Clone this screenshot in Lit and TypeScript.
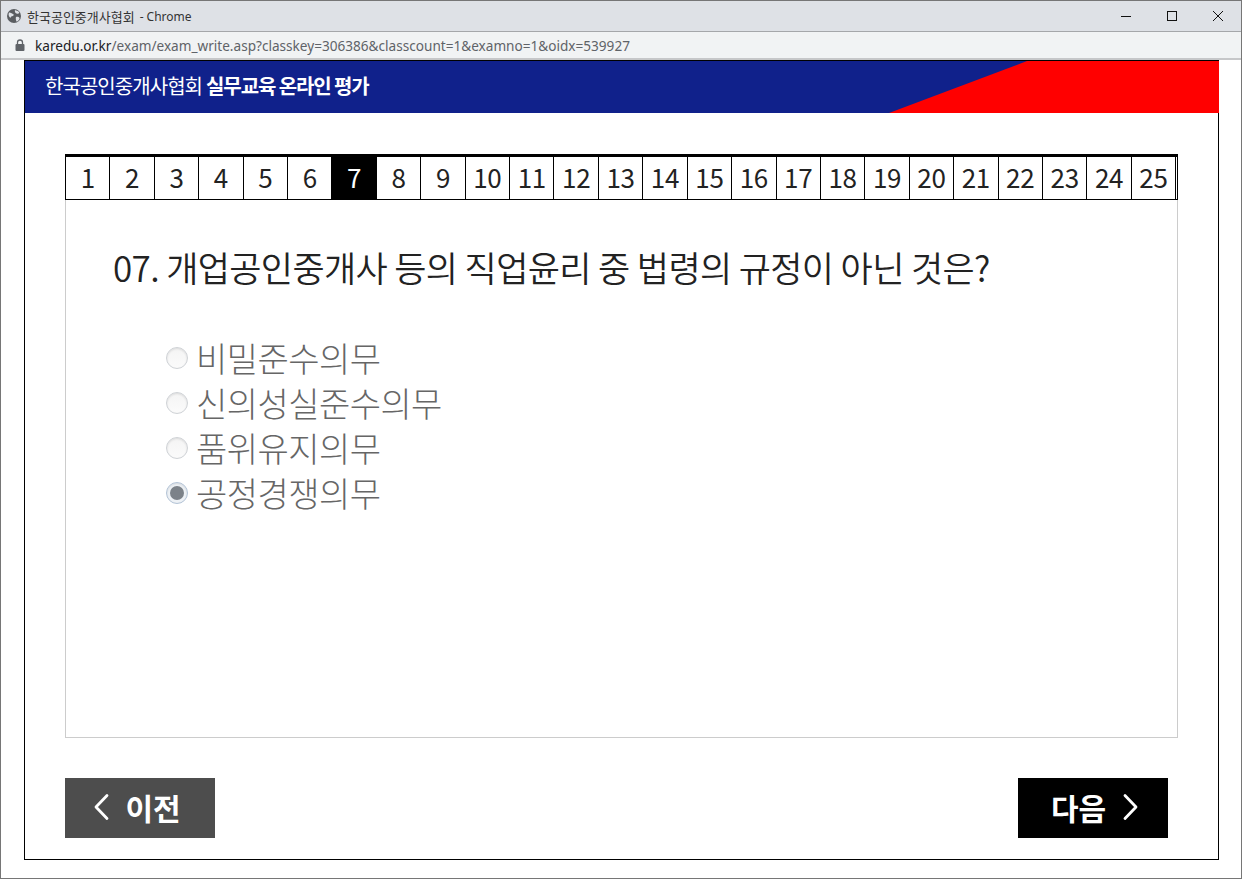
import { LitElement, html, css, svg } from "lit";
import { customElement } from "lit/decorators.js";

const nums = Array.from({ length: 25 }, (_, i) => i + 1);
const opts = ["비밀준수의무", "신의성실준수의무", "품위유지의무", "공정경쟁의무"];

@customElement("app-root")
export class AppRoot extends LitElement {
  static styles = css`
    :host { display: block; width: 1242px; height: 879px; font-family: "Noto Sans CJK KR", "Noto Sans", sans-serif; }
    * { box-sizing: border-box; }
    .win { width: 1242px; height: 879px; border: 1px solid #767676; display: flex; flex-direction: column; background: #fff; overflow: hidden; }
    .title { height: 31px; flex: none; background: #dee1e6; border-bottom: 1px solid #a5a7aa; display: flex; align-items: center; padding-left: 5px; font-size: 13px; color: #333; }
    .title svg { margin-right: 5px; flex: none; }
    .title .dash { font-family: "Noto Sans", sans-serif; font-size: 12px; margin-left: 5px; }
    .ctrls { margin-left: auto; display: flex; align-items: center; }
    .ctrls svg { display: block; margin: 0; width: 46px; height: 30px; }
    .addr { height: 28px; flex: none; background: #f1f3f4; border-bottom: 2px solid #c6c7c9; display: flex; align-items: center; padding-left: 14px; font-family: "Noto Sans", sans-serif; font-size: 13.6px; color: #5f6368; }
    .addr svg { margin-right: 10px; flex: none; }
    .addr b { font-weight: 400; color: #202124; }
    .frame { margin: 0 22px 0 23px; height: 800px; border: 1px solid #000; display: flex; flex-direction: column; }
    .head { height: 52px; flex: none; background: #10218b; display: flex; align-items: center; padding-left: 20px; color: #fff; font-size: 20px; letter-spacing: -0.95px; margin-right: -1px; }
    .head span, .head strong { padding-bottom: 3px; }
    .head strong { font-weight: 700; margin-left: 4px; letter-spacing: -1.1px; }
    .wedge { margin-left: auto; width: 330px; height: 100%; background: #f00; clip-path: polygon(138px 0, 100% 0, 100% 100%, 0 100%); }
    .body { flex: 1; padding: 41px 40px 21px 40px; display: flex; flex-direction: column; }
    .tabs { height: 46px; flex: none; display: flex; border-top: 3px solid #000; border-bottom: 1px solid #000; border-left: 1px solid #000; border-right: 1px solid #000; padding-right: 1px; }
    .tab { flex: 1; border-right: 1px solid #000; display: flex; align-items: center; justify-content: center; font-size: 26px; color: #222; line-height: 1; letter-spacing: -0.3px; padding-bottom: 3px; }
    .tab.on { background: #000; color: #fff; }
    .panel { height: 538px; flex: none; border: 1px solid #ccc; border-top: 0; padding: 38px 47px 0 47px; }
    .q { margin: 0; font-size: 35px; font-weight: 350; line-height: 58px; color: #222; letter-spacing: -0.63px; white-space: nowrap; }
    .opts { list-style: none; margin: 39px 0 0 53px; padding: 0; }
    .opt { height: 45px; display: flex; align-items: center; color: #666; font-size: 34px; font-weight: 300; line-height: 45px; letter-spacing: -0.55px; }
    .radio { width: 22px; height: 22px; border-radius: 50%; border: 1px solid #cfd2d6; background: linear-gradient(#f4f4f4, #fbfbfb); margin-right: 8px; flex: none; box-shadow: inset 0 1px 2px #0000001a; display: flex; align-items: center; justify-content: center; }
    .radio.on { border-color: #b3c3d6; background: #eef2f6; }
    .radio.on::after { content: ""; width: 14px; height: 14px; border-radius: 50%; background: #7c8289; }
    .foot { display: flex; justify-content: space-between; margin-top: 40px; padding-right: 10px; }
    .btn { width: 150px; height: 60px; border: 0; display: flex; align-items: center; justify-content: center; color: #fff; font-family: inherit; font-size: 30px; font-weight: 700; letter-spacing: 0; }
    .btn span { padding-bottom: 2px; }
    .btn svg { overflow: visible; }
    .btn.prev { background: #4d4d4d; gap: 15px; padding: 0 7px 0 0; }
    .btn.next { background: #000; gap: 16px; padding: 0 0 0 5px; }
  `;

  private chev(points: string) {
    return html`<svg width="18" height="28" viewBox="0 0 18 28" fill="none" stroke="#fff" stroke-width="2.8" stroke-linejoin="round" stroke-linecap="round">${svg`<polyline points=${points} />`}</svg>`;
  }

  render() {
    return html`<div class="win">
      <div class="title">
        <svg width="16" height="16" viewBox="0 0 16 16"><circle cx="8" cy="8" r="7" fill="#5a5d61"/><path d="M3 4.500c2 0 2.500 1 4 1.500s.5 2-1 2.300S5 10.500 4 9.500 2 7 3 4.500zM9 2c1 .8 3 .5 4 2s-1 2-2.500 1.500S8.500 3 9 2zM10 9c1.500-.5 3 0 3.500 1S12 13 11 13.500 9.500 10 10 9z" fill="#dee1e6"/></svg>
        <span>한국공인중개사협회</span><span class="dash">- Chrome</span>
        <div class="ctrls">
          <svg viewBox="0 0 46 30"><line x1="18" y1="15.500" x2="28" y2="15.500" stroke="#111"/></svg>
          <svg viewBox="0 0 46 30"><rect x="18.500" y="10.500" width="9" height="9" fill="none" stroke="#111"/></svg>
          <svg viewBox="0 0 46 30"><path d="M18 10l10 10M28 10L18 20" stroke="#111" fill="none"/></svg>
        </div>
      </div>
      <div class="addr">
        <svg width="10" height="12" viewBox="0 0 10 12"><path d="M2.500 5V3.500a2.500 2.500 0 0 1 5 0V5" fill="none" stroke="#5f6368" stroke-width="1.300"/><rect x="0.500" y="5" width="9" height="7" rx="1" fill="#5f6368"/></svg>
        <span><b>karedu.or.kr</b>/exam/exam_write.asp?classkey=306386&amp;classcount=1&amp;examno=1&amp;oidx=539927</span>
      </div>
      <div class="frame">
        <header class="head">
          <span>한국공인중개사협회</span><strong>실무교육 온라인 평가</strong>
          <div class="wedge"></div>
        </header>
        <main class="body">
          <nav class="tabs">
            ${nums.map((n) => html`<div class="tab ${n === 7 ? "on" : ""}">${n}</div>`)}
          </nav>
          <section class="panel">
            <h1 class="q">07. 개업공인중개사 등의 직업윤리 중 법령의 규정이 아닌 것은?</h1>
            <ul class="opts">
              ${opts.map((o, i) => html`<li class="opt"><span class="radio ${i === 3 ? "on" : ""}"></span>${o}</li>`)}
            </ul>
          </section>
          <div class="foot">
            <button class="btn prev">${this.chev("15,1.500 4,13 15,24.500")}<span>이전</span></button>
            <button class="btn next"><span>다음</span>${this.chev("3,1.500 14,13 3,24.500")}</button>
          </div>
        </main>
      </div>
    </div>`;
  }
}
